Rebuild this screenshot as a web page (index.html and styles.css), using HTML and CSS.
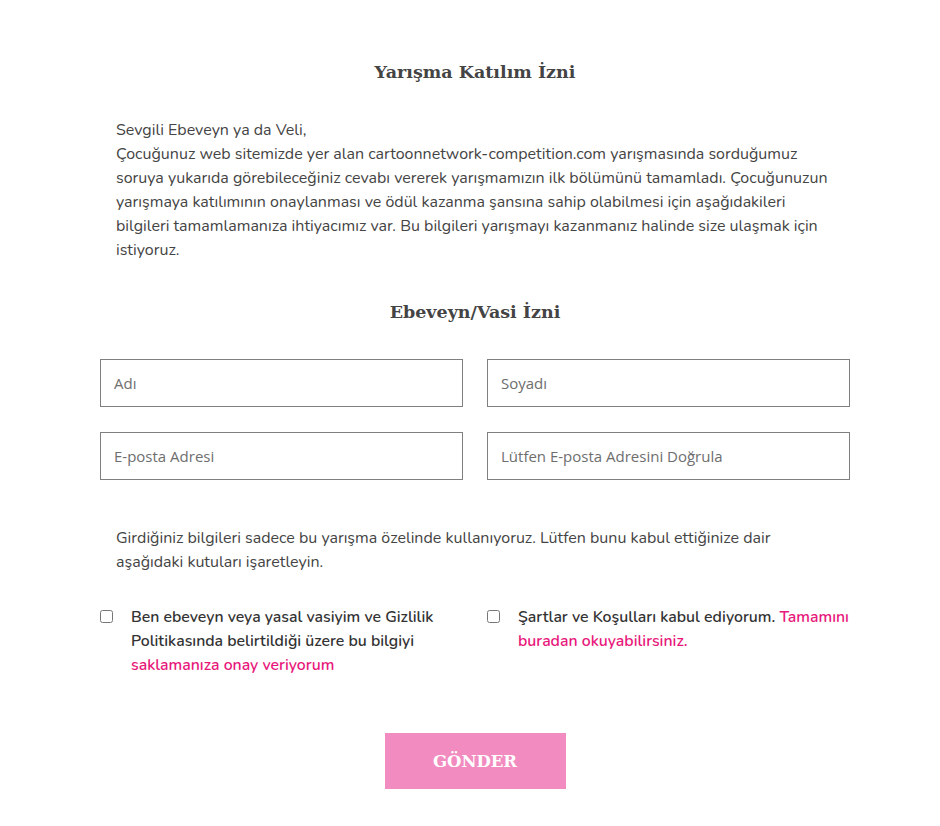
FILE: index.html
```html
<!DOCTYPE html>
<html lang="tr">
<head>
<meta charset="utf-8">
<title>Yarışma Katılım İzni</title>
<link rel="stylesheet" href="styles.css">
</head>
<body>
<main class="page">
  <h1 class="title">Yarışma Katılım İzni</h1>
  <p class="intro">Sevgili Ebeveyn ya da Veli,<br>Çocuğunuz web sitemizde yer alan cartoonnetwork-competition.com yarışmasında sorduğumuz soruya yukarıda görebileceğiniz cevabı vererek yarışmamızın ilk bölümünü tamamladı. Çocuğunuzun yarışmaya katılımının onaylanması ve ödül kazanma şansına sahip olabilmesi için aşağıdakileri bilgileri tamamlamanıza ihtiyacımız var. Bu bilgileri yarışmayı kazanmanız halinde size ulaşmak için istiyoruz.</p>
  <h2 class="title sub">Ebeveyn/Vasi İzni</h2>
  <form class="form">
    <div class="grid">
      <input class="field" type="text" placeholder="Adı">
      <input class="field" type="text" placeholder="Soyadı">
      <input class="field" type="email" placeholder="E-posta Adresi">
      <input class="field" type="email" placeholder="Lütfen E-posta Adresini Doğrula">
    </div>
    <p class="note">Girdiğiniz bilgileri sadece bu yarışma özelinde kullanıyoruz. Lütfen bunu kabul ettiğinize dair aşağıdaki kutuları işaretleyin.</p>
    <div class="checks">
      <label class="check"><input type="checkbox" class="box"><span>Ben ebeveyn veya yasal vasiyim ve Gizlilik Politikasında belirtildiği üzere bu bilgiyi <a class="link" href="#">saklamanıza onay veriyorum</a></span></label>
      <label class="check"><input type="checkbox" class="box"><span>Şartlar ve Koşulları kabul ediyorum. <a class="link" href="#">Tamamını buradan okuyabilirsiniz.</a></span></label>
    </div>
    <div class="actions"><button type="button" class="submit">GÖNDER</button></div>
  </form>
</main>
</body>
</html>
```
FILE: styles.css
```css
* { box-sizing: border-box; }
body {
  margin: 0;
  background: #fff;
  font-family: "Nunito", "Open Sans", "Noto Sans", sans-serif;
  color: #444;
}
.page {
  width: 750px;
  margin-left: 100px;
  padding-top: 57px;
}
.title {
  margin: 0;
  text-align: center;
  font-family: "DejaVu Serif", serif;
  font-weight: bold;
  font-size: 17.5px;
  line-height: 30px;
  color: #444;
}
.intro {
  margin: 31px 0 0;
  padding: 0 16px;
  font-size: 16px;
  line-height: 24px;
}
.sub { margin-top: 35px; }
.form { margin-top: 32px; }
.grid {
  display: grid;
  grid-template-columns: 1fr 1fr;
  column-gap: 24px;
  row-gap: 25px;
}
.field {
  height: 48px;
  border: 1px solid #808080;
  padding: 0 13px;
  font-family: "Open Sans", sans-serif;
  font-size: 15px;
  color: #444;
  outline: none;
  border-radius: 0;
}
.field::placeholder { color: #6e6e6e; }
.note {
  margin: 46px 0 0;
  padding: 0 16px;
  font-size: 16px;
  line-height: 24px;
}
.checks {
  margin-top: 31px;
  display: grid;
  grid-template-columns: 1fr 1fr;
  column-gap: 24px;
}
.check {
  display: flex;
  align-items: flex-start;
  font-size: 15.8px;
  line-height: 24px;
  font-weight: 600;
  color: #333;
}
.box {
  width: 13px;
  height: 13px;
  margin: 5px 18px 0 0;
  flex: none;
}
.link { color: #e8177b; text-decoration: none; }
.actions {
  margin-top: 56px;
  display: flex;
  justify-content: center;
  padding-bottom: 37px;
}
.submit {
  width: 181px;
  height: 56px;
  border: 0;
  background: #f18bc0;
  color: #fff;
  font-family: "DejaVu Serif", serif;
  font-weight: bold;
  font-size: 16.5px;
  cursor: pointer;
}
```
